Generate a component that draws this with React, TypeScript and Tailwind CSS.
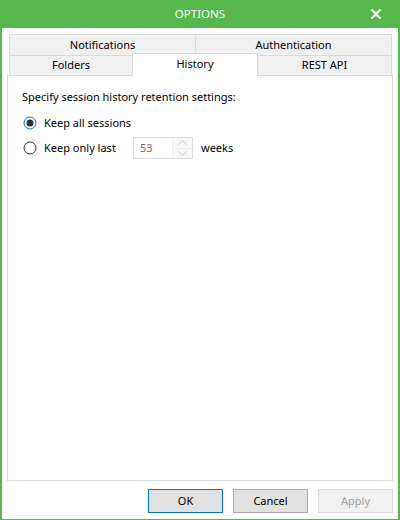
import React from "react";

const font = { fontFamily: '"Noto Sans", "Open Sans", sans-serif' };

function Radio({ checked }: { checked: boolean }) {
  return (
    <svg width="14" height="14" viewBox="0 0 14 14" className="shrink-0">
      <circle cx="7" cy="7" r="6" fill="white" stroke={checked ? "#0078d7" : "#333333"} strokeWidth="1" />
      {checked && <circle cx="7" cy="7" r="3.5" fill="#333333" />}
    </svg>
  );
}

export default function App() {
  return (
    <div className="w-[400px] h-[520px] flex flex-col bg-white text-[11px] text-black" style={font}>
      <div className="h-[28px] bg-[#54b84b] flex items-center justify-center relative text-white text-[11.5px]">
        <span>OPTIONS</span>
        <svg width="12" height="12" viewBox="0 0 12 12" className="absolute right-[18px] top-[8px]">
          <path d="M1.5 1.5 L10.5 10.5 M10.5 1.5 L1.5 10.5" stroke="white" strokeWidth="2.2" />
        </svg>
      </div>
      <div className="flex-1 flex flex-col border-x-2 border-b border-[#54b84b] pl-[5px] pr-[5px] pt-[6px] pb-[6px]">
        <div className="flex flex-col ml-[2px] mr-[1px]">
          <div className="flex h-[21px]">
            <div className="w-[187px] border border-b-0 border-[#d9d9d9] bg-[#f0f0f0] flex items-center justify-center">Notifications</div>
            <div className="flex-1 border border-l-0 border-b-0 border-[#d9d9d9] bg-[#f0f0f0] flex items-center justify-center">Authentication</div>
          </div>
          <div className="flex h-[20px] items-end relative">
            <div className="w-[124px] h-[20px] border border-b-0 border-[#d9d9d9] bg-[#f0f0f0] flex items-center justify-center">Folders</div>
            <div className="w-[126px] h-[23px] -mt-[3px] -mb-[1px] border border-b-0 border-[#d9d9d9] bg-white flex items-center justify-center relative z-10 -ml-[1px] -mr-[1px] pb-[2px]">History</div>
            <div className="flex-1 h-[20px] border border-b-0 border-[#d9d9d9] bg-[#f0f0f0] flex items-center justify-center">REST API</div>
          </div>
        </div>
        <div className="h-[406px] border border-[#d9d9d9] flex flex-col pl-[14px] pt-[13px]">
          <div className="leading-[16px]">Specify session history retention settings:</div>
          <div className="flex items-center gap-[7px] mt-[10px] h-[16px] ml-[1px]">
            <Radio checked />
            <span>Keep all sessions</span>
          </div>
          <div className="flex items-center mt-[6px] ml-[1px]">
            <Radio checked={false} />
            <span className="ml-[7px] w-[89px]">Keep only last</span>
            <div className="w-[60px] h-[22px] border border-[#d9d9d9] flex">
              <div className="flex-1 flex items-center pl-[6px] text-[#6d6d6d]">53</div>
              <div className="w-[20px] flex flex-col border-l border-[#eeeeee]">
                <div className="flex-1 flex items-center justify-center bg-[#f7f7f7] border-b border-[#eeeeee]">
                  <svg width="9" height="5" viewBox="0 0 9 5"><path d="M0.5 4.5 L4.5 0.5 L8.5 4.5" stroke="#c8c8c8" fill="none" /></svg>
                </div>
                <div className="flex-1 flex items-center justify-center bg-[#f7f7f7]">
                  <svg width="9" height="5" viewBox="0 0 9 5"><path d="M0.5 0.5 L4.5 4.5 L8.5 0.5" stroke="#c8c8c8" fill="none" /></svg>
                </div>
              </div>
            </div>
            <span className="ml-[8px]">weeks</span>
          </div>
        </div>
        <div className="flex justify-end gap-[10px] mt-[8px]">
          <button className="w-[75px] h-[24px] border border-[#0078d7] bg-[#e1e1e1] flex items-center justify-center">OK</button>
          <button className="w-[75px] h-[24px] border border-[#adadad] bg-[#e1e1e1] flex items-center justify-center">Cancel</button>
          <button className="w-[75px] h-[24px] border border-[#d9d9d9] bg-[#f0f0f0] text-[#a0a0a0] flex items-center justify-center">Apply</button>
        </div>
      </div>
    </div>
  );
}
